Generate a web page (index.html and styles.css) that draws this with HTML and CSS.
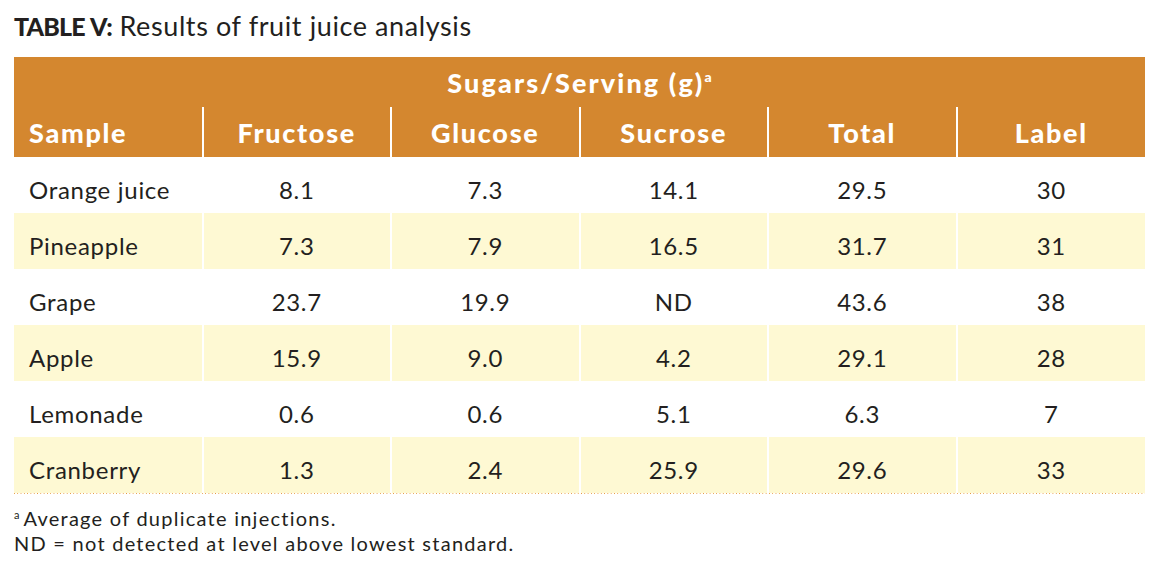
FILE: index.html
```html
<!DOCTYPE html>
<html lang="en">
<head>
<meta charset="utf-8">
<title>Table V: Results of fruit juice analysis</title>
<link rel="stylesheet" href="styles.css">
</head>
<body>
<div class="page">
  <h1 class="title"><span class="title-label">TABLE V:</span> Results of fruit juice analysis</h1>
  <table class="data">
    <colgroup>
      <col><col><col><col><col><col>
    </colgroup>
    <thead>
      <tr class="group-row">
        <th colspan="6">Sugars/Serving (g)<sup class="note">a</sup></th>
      </tr>
      <tr class="col-row">
        <th class="first">Sample</th>
        <th>Fructose</th>
        <th>Glucose</th>
        <th>Sucrose</th>
        <th>Total</th>
        <th>Label</th>
      </tr>
    </thead>
    <tbody>
      <tr><td class="first">Orange juice</td><td>8.1</td><td>7.3</td><td>14.1</td><td>29.5</td><td>30</td></tr>
      <tr class="alt"><td class="first">Pineapple</td><td>7.3</td><td>7.9</td><td>16.5</td><td>31.7</td><td>31</td></tr>
      <tr><td class="first">Grape</td><td>23.7</td><td>19.9</td><td>ND</td><td>43.6</td><td>38</td></tr>
      <tr class="alt"><td class="first">Apple</td><td>15.9</td><td>9.0</td><td>4.2</td><td>29.1</td><td>28</td></tr>
      <tr><td class="first">Lemonade</td><td>0.6</td><td>0.6</td><td>5.1</td><td>6.3</td><td>7</td></tr>
      <tr class="alt"><td class="first">Cranberry</td><td>1.3</td><td>2.4</td><td>25.9</td><td>29.6</td><td>33</td></tr>
    </tbody>
  </table>
  <div class="rule"></div>
  <div class="footnotes">
    <p><sup class="fn-mark">a</sup>Average of duplicate injections.</p>
    <p>ND = not detected at level above lowest standard.</p>
  </div>
</div>
</body>
</html>
```

FILE: styles.css
```css
html, body {
  margin: 0;
  padding: 0;
  background: #ffffff;
}

body {
  font-family: "Lato", "Liberation Sans", sans-serif;
  color: #231f20;
}

.page {
  width: 1131px;
  padding: 10px 0 0 14px;
}

.title {
  margin: 0;
  height: 47px;
  font-size: 27px;
  line-height: 32px;
  font-weight: 400;
  letter-spacing: 0.6px;
}

.title-label {
  font-weight: 900;
  font-size: 25px;
  letter-spacing: -0.8px;
  word-spacing: 1px;
}

.data {
  width: 1131px;
  table-layout: fixed;
  border-collapse: collapse;
  border-spacing: 0;
}

.data th {
  background: #d4872f;
  color: #ffffff;
  font-weight: 900;
  padding: 0;
  text-align: center;
}

.group-row th {
  height: 50px;
  font-size: 27px;
  letter-spacing: 2.1px;
  vertical-align: middle;
}

.note {
  font-size: 14px;
  vertical-align: 11px;
  line-height: 0;
  letter-spacing: 0;
}

.col-row th {
  height: 50px;
  font-size: 27px;
  letter-spacing: 1.7px;
  border-left: 2px solid #ffffff;
  vertical-align: middle;
}

.col-row th.first {
  border-left: none;
  text-align: left;
  padding-left: 15px;
}

.data td {
  height: 56px;
  padding: 8px 0 0 0;
  box-sizing: border-box;
  font-size: 24px;
  font-weight: 400;
  letter-spacing: 0.7px;
  text-align: center;
  vertical-align: middle;
  border-left: 2px solid #ffffff;
}

.data td.first {
  border-left: none;
  text-align: left;
  padding-left: 15px;
}

.data tr.alt td {
  background: #fef9d3;
}

.rule {
  width: 1131px;
  height: 1px;
  background-image: linear-gradient(to right, #e6973f 0, #e6973f 1px, transparent 1px);
  background-size: 3.3px 1px;
  background-repeat: repeat-x;
}

.footnotes {
  padding-top: 12px;
  font-size: 20px;
  line-height: 25px;
  font-weight: 400;
  letter-spacing: 1.25px;
}

.footnotes p {
  margin: 0;
}

.fn-mark {
  font-size: 11px;
  vertical-align: 7px;
  line-height: 0;
  margin-right: 4px;
  letter-spacing: 0;
}
```
